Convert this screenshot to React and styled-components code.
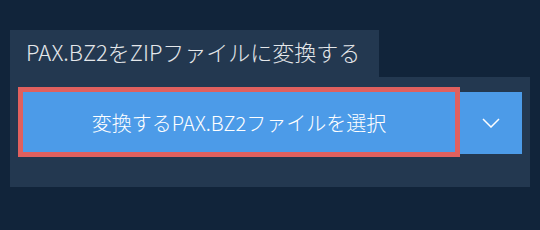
import React from 'react';
import styled, { createGlobalStyle } from 'styled-components';

const GlobalStyle = createGlobalStyle`
    html, body {
        margin: 0;
        padding: 0;
        background: #11243a;
        font-family: "Noto Sans CJK JP", "Noto Sans", sans-serif;
    }
`;

const Page = styled.div`
    padding: 30px 10px 0 10px;
    width: 520px;
`;

const Tab = styled.div`
    display: inline-block;
    width: 369px;
    height: 47px;
    box-sizing: border-box;
    background: #233850;
    color: #e4e7ea;
    font-size: 22px;
    font-weight: 300;
    line-height: 42px;
    padding: 0 0 0 16px;
    white-space: nowrap;
    vertical-align: top;
`;

const Panel = styled.div`
    height: 110px;
    box-sizing: border-box;
    background: #233850;
    padding: 10px 8px;
    display: flex;
    align-items: flex-start;
`;

const SelectButton = styled.button`
    width: 442px;
    height: 70px;
    box-sizing: border-box;
    border: 5px solid #e0605e;
    background: #4c9be8;
    color: #fff;
    font-family: inherit;
    font-size: 20px;
    font-weight: 300;
    padding: 0;
    cursor: pointer;
`;

const DropButton = styled.button`
    width: 62px;
    height: 62px;
    margin-top: 5px;
    border: 0;
    padding: 0;
    background: #4c9be8;
    display: flex;
    align-items: center;
    justify-content: center;
    cursor: pointer;
`;

const Chevron = () => (
    <svg width="18" height="10" viewBox="0 0 18 10">
        <polyline points="1,1 9,9 17,1" fill="none" stroke="#fff" strokeWidth="1.5" />
    </svg>
);

export default function App() {
    return (
        <Page>
            <GlobalStyle />
            <Tab>PAX.BZ2をZIPファイルに変換する</Tab>
            <Panel>
                <SelectButton>変換するPAX.BZ2ファイルを選択</SelectButton>
                <DropButton>
                    <Chevron />
                </DropButton>
            </Panel>
        </Page>
    );
}
